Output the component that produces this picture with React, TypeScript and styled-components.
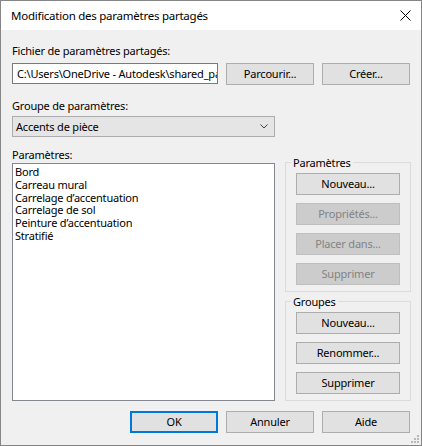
import styled, { createGlobalStyle } from "styled-components";

const GlobalStyle = createGlobalStyle`
  html, body {
    margin: 0;
    padding: 0;
    background: #ffffff;
  }
  * {
    box-sizing: border-box;
  }
`;

const Window = styled.div`
  position: relative;
  width: 422px;
  height: 446px;
  border: 1px solid #868686;
  background: #f0f0f0;
  display: flex;
  flex-direction: column;
  font-family: "Noto Sans", "Open Sans", sans-serif;
  font-size: 11px;
  letter-spacing: -0.2px;
  color: #000;
  overflow: hidden;
`;

const TitleBar = styled.div`
  height: 29px;
  background: #fff;
  display: flex;
  align-items: center;
  justify-content: space-between;
  padding: 0 10px 0 10px;
  flex-shrink: 0;
`;

const Title = styled.span`
  font-size: 11.5px;
  line-height: 20px;
  letter-spacing: -0.25px;
`;

const Body = styled.div`
  flex: 1;
  display: flex;
  flex-direction: column;
  padding: 13px 10px 0 11px;
`;

const FieldLabel = styled.div<{ $gap?: number; $top?: number }>`
  height: 15px;
  line-height: 15px;
  margin-top: ${(p) => p.$top ?? 0}px;
  margin-bottom: ${(p) => p.$gap ?? 0}px;
  white-space: nowrap;
`;

const Row = styled.div`
  display: flex;
  align-items: flex-start;
  gap: 8px;
`;

const PathInput = styled.input`
  width: 206px;
  height: 21px;
  border: 1px solid #7a7a7a;
  background: #fff;
  padding: 0 0 0 4px;
  margin: 0;
  font: inherit;
  letter-spacing: inherit;
  color: #000;
  outline: none;
`;

const Button = styled.button<{ $width?: number; $default?: boolean }>`
  width: ${(p) => p.$width ?? 88}px;
  height: 22px;
  margin: 0;
  padding: 0;
  font: inherit;
  letter-spacing: inherit;
  line-height: 18px;
  color: #000;
  background: #e1e1e1;
  border: ${(p) => (p.$default ? "2px solid #0078d7" : "1px solid #adadad")};
  border-radius: 0;
  flex-shrink: 0;

  &:disabled {
    color: #838383;
    background: #cccccc;
    border-color: #bfbfbf;
  }
`;

const Combo = styled.div`
  width: 263px;
  height: 21px;
  border: 1px solid #adadad;
  background: #e5e5e5;
  display: flex;
  align-items: center;
  justify-content: space-between;
  padding: 0 6px 0 3px;
`;

const MainArea = styled.div`
  display: grid;
  grid-template-columns: 263px 126px;
  column-gap: 10px;
  margin-top: 10px;
`;

const LeftColumn = styled.div`
  display: flex;
  flex-direction: column;
`;

const ListBox = styled.ul`
  list-style: none;
  margin: 1px 0 0 0;
  padding: 2px 0 0 2px;
  height: 238px;
  background: #fff;
  border: 1px solid #828790;
`;

const ListItem = styled.li`
  line-height: 12.8px;
  height: 12.8px;
  white-space: nowrap;
`;

const RightColumn = styled.div`
  display: flex;
  flex-direction: column;
  gap: 2px;
  padding-top: 8px;
`;

const GroupBox = styled.fieldset`
  margin: 0;
  padding: 3px 10px 6px 10px;
  border: 1px solid #dcdcdc;
  min-width: 0;
  display: flex;
  flex-direction: column;
  gap: 8px;
`;

const Legend = styled.legend`
  padding: 0 2px;
  margin-left: -5px;
  line-height: 15px;
  height: 15px;
`;

const Footer = styled.div`
  display: flex;
  justify-content: flex-end;
  gap: 8px;
  margin-top: 10px;
  padding-right: 1px;
`;

const SizeGrip = styled.svg`
  position: absolute;
  right: 2px;
  bottom: 2px;
`;

const items = [
  "Bord",
  "Carreau mural",
  "Carrelage d’accentuation",
  "Carrelage de sol",
  "Peinture d’accentuation",
  "Stratifié",
];

export default function App() {
  return (
    <>
      <GlobalStyle />
      <Window>
        <TitleBar>
          <Title>Modification des paramètres partagés</Title>
          <svg width="11" height="11" viewBox="0 0 11 11">
            <path d="M0.5 0.5 L10.5 10.5 M10.5 0.5 L0.5 10.5" stroke="#000" strokeWidth="1" />
          </svg>
        </TitleBar>
        <Body>
          <FieldLabel $gap={5}>Fichier de paramètres partagés:</FieldLabel>
          <Row>
            <PathInput readOnly value="C:\Users\OneDrive - Autodesk\shared_parameters.txt" />
            <Button>Parcourir...</Button>
            <Button>Créer...</Button>
          </Row>
          <FieldLabel $top={13} $gap={3}>Groupe de paramètres:</FieldLabel>
          <Combo>
            <span>Accents de pièce</span>
            <svg width="8" height="5" viewBox="0 0 8 5">
              <path d="M0.5 0.5 L4 4 L7.5 0.5" stroke="#404040" strokeWidth="1" fill="none" />
            </svg>
          </Combo>
          <MainArea>
            <LeftColumn>
              <FieldLabel>Paramètres:</FieldLabel>
              <ListBox>
                {items.map((it) => (
                  <ListItem key={it}>{it}</ListItem>
                ))}
              </ListBox>
            </LeftColumn>
            <RightColumn>
              <GroupBox>
                <Legend>Paramètres</Legend>
                <Button $width={104}>Nouveau...</Button>
                <Button $width={104} disabled>Propriétés...</Button>
                <Button $width={104} disabled>Placer dans...</Button>
                <Button $width={104} disabled>Supprimer</Button>
              </GroupBox>
              <GroupBox>
                <Legend>Groupes</Legend>
                <Button $width={104}>Nouveau...</Button>
                <Button $width={104}>Renommer...</Button>
                <Button $width={104}>Supprimer</Button>
              </GroupBox>
            </RightColumn>
          </MainArea>
          <Footer>
            <Button $default>OK</Button>
            <Button>Annuler</Button>
            <Button>Aide</Button>
          </Footer>
        </Body>
        <SizeGrip width="8" height="8" viewBox="0 0 8 8">
          <g fill="#b8b8b8">
            <rect x="6" y="0" width="2" height="2" />
            <rect x="3" y="3" width="2" height="2" />
            <rect x="6" y="3" width="2" height="2" />
            <rect x="0" y="6" width="2" height="2" />
            <rect x="3" y="6" width="2" height="2" />
            <rect x="6" y="6" width="2" height="2" />
          </g>
        </SizeGrip>
      </Window>
    </>
  );
}
